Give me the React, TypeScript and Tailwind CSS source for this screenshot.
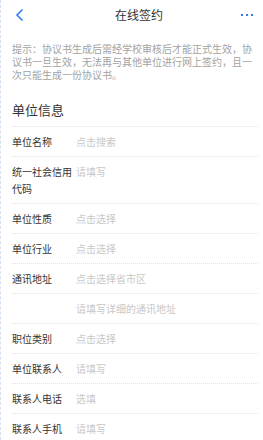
import React from "react";

const rows: { label: string; value: string }[] = [
  { label: "单位名称", value: "点击搜索" },
  { label: "统一社会信用代码", value: "请填写" },
  { label: "单位性质", value: "点击选择" },
  { label: "单位行业", value: "点击选择" },
  { label: "通讯地址", value: "点击选择省市区" },
  { label: "", value: "请填写详细的通讯地址" },
  { label: "职位类别", value: "点击选择" },
  { label: "单位联系人", value: "请填写" },
  { label: "联系人电话", value: "选填" },
  { label: "联系人手机", value: "请填写" },
];

export default function App() {
  return (
    <div
      className="w-[263px] h-[440px] overflow-hidden bg-white border-l border-dashed border-[#d6e0ee]"
      style={{ fontFamily: '"Noto Sans CJK SC", "Noto Sans", sans-serif' }}
    >
      {/* header */}
      <div className="h-[30px] flex items-center justify-between pl-[14px] pr-[6px]">
        <svg width="10" height="14" viewBox="0 0 10 14" fill="none">
          <path d="M7.5 1.5 L2 7 L7.5 12.5" stroke="#2f7ef5" strokeWidth="1.6" />
        </svg>
        <span className="text-[12px] text-[#333] ml-[12px]">在线签约</span>
        <div className="flex gap-[3px] w-[16px]">
          <span className="w-[2px] h-[2px] bg-[#2f7ef5]" />
          <span className="w-[2px] h-[2px] bg-[#2f7ef5]" />
          <span className="w-[2px] h-[2px] bg-[#2f7ef5]" />
        </div>
      </div>

      {/* tip */}
      <p className="px-[11px] pt-[12px] text-[10px] leading-[13px] text-[#a3a3a3]">
        提示：协议书生成后需经学校审核后才能正式生效，协议书一旦生效，无法再与其他单位进行网上签约，且一次只能生成一份协议书。
      </p>

      {/* section */}
      <div className="pl-[11px] pr-[5px] mt-[20px]">
        <h2 className="text-[13px] leading-[18px] text-[#333] pb-[7px]">单位信息</h2>
        {rows.map((r, i) => (
          <div
            key={i}
            className="flex border-t border-dotted border-[#e2e2e2] py-[6px] text-[10px] leading-[17px]"
          >
            <div className="w-[64px] shrink-0 text-[#333]">{r.label}</div>
            <div className="text-[#c8c8c8]">{r.value}</div>
          </div>
        ))}
      </div>
    </div>
  );
}
